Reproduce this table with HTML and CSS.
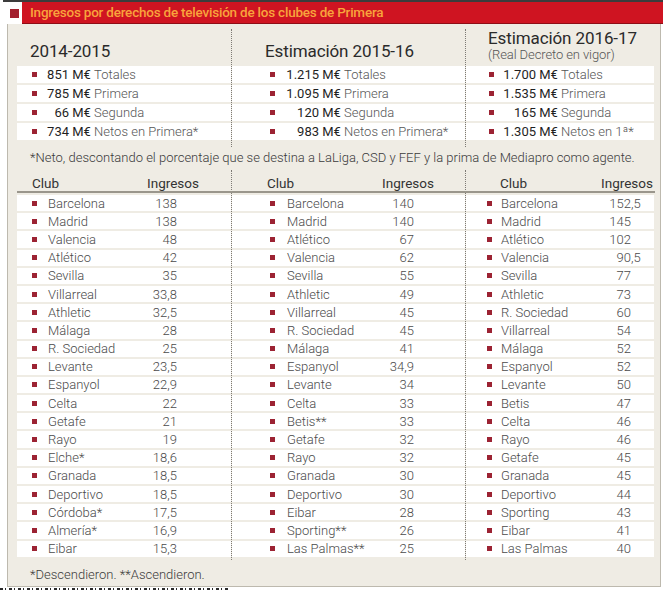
FILE: index.html
```html
<!DOCTYPE html>
<html lang="es">
<head>
<meta charset="utf-8">
<title>Ingresos por derechos de televisión</title>
<link rel="stylesheet" href="styles.css">
</head>
<body>
<div class="topline"></div>
<header class="masthead">
  <span class="mark"></span>
  <div class="bar"><h1 class="title">Ingresos por derechos de televisión de los clubes de Primera</h1></div>
</header>
<main class="panel">
  <section class="summary">
    <div class="scol c1">
      <div class="shead"><h2>2014-2015</h2></div>
      <div class="srow"><i class="dot"></i><span class="txt"><b class="n">851</b> M€ <span class="lbl">Totales</span></span></div>
      <div class="srow"><i class="dot"></i><span class="txt"><b class="n">785</b> M€ <span class="lbl">Primera</span></span></div>
      <div class="srow"><i class="dot"></i><span class="txt"><b class="n">66</b> M€ <span class="lbl">Segunda</span></span></div>
      <div class="srow"><i class="dot"></i><span class="txt"><b class="n">734</b> M€ <span class="lbl">Netos en Primera*</span></span></div>
    </div>
    <div class="scol c2">
      <div class="shead"><h2>Estimación 2015-16</h2></div>
      <div class="srow"><i class="dot"></i><span class="txt"><b class="n">1.215</b> M€ <span class="lbl">Totales</span></span></div>
      <div class="srow"><i class="dot"></i><span class="txt"><b class="n">1.095</b> M€ <span class="lbl">Primera</span></span></div>
      <div class="srow"><i class="dot"></i><span class="txt"><b class="n">120</b> M€ <span class="lbl">Segunda</span></span></div>
      <div class="srow"><i class="dot"></i><span class="txt"><b class="n">983</b> M€ <span class="lbl">Netos en Primera*</span></span></div>
    </div>
    <div class="scol c3">
      <div class="shead"><h2>Estimación 2016-17</h2><p class="sub">(Real Decreto en vigor)</p></div>
      <div class="srow"><i class="dot"></i><span class="txt"><b class="n">1.700</b> M€ <span class="lbl">Totales</span></span></div>
      <div class="srow"><i class="dot"></i><span class="txt"><b class="n">1.535</b> M€ <span class="lbl">Primera</span></span></div>
      <div class="srow"><i class="dot"></i><span class="txt"><b class="n">165</b> M€ <span class="lbl">Segunda</span></span></div>
      <div class="srow"><i class="dot"></i><span class="txt"><b class="n">1.305</b> M€ <span class="lbl">Netos en 1ª*</span></span></div>
    </div>
  </section>

  <p class="note">*Neto, descontando el porcentaje que se destina a LaLiga, CSD y FEF y la prima de Mediapro como agente.</p>

  <section class="table">
    <div class="tcol c1">
      <div class="thead"><span class="hclub">Club</span><span>Ingresos</span></div>
      <div class="tbody">
        <div class="trow"><i class="dot"></i><span class="club">Barcelona</span><span class="val">138</span></div>
        <div class="trow"><i class="dot"></i><span class="club">Madrid</span><span class="val">138</span></div>
        <div class="trow"><i class="dot"></i><span class="club">Valencia</span><span class="val">48</span></div>
        <div class="trow"><i class="dot"></i><span class="club">Atlético</span><span class="val">42</span></div>
        <div class="trow"><i class="dot"></i><span class="club">Sevilla</span><span class="val">35</span></div>
        <div class="trow"><i class="dot"></i><span class="club">Villarreal</span><span class="val">33,8</span></div>
        <div class="trow"><i class="dot"></i><span class="club">Athletic</span><span class="val">32,5</span></div>
        <div class="trow"><i class="dot"></i><span class="club">Málaga</span><span class="val">28</span></div>
        <div class="trow"><i class="dot"></i><span class="club">R. Sociedad</span><span class="val">25</span></div>
        <div class="trow"><i class="dot"></i><span class="club">Levante</span><span class="val">23,5</span></div>
        <div class="trow"><i class="dot"></i><span class="club">Espanyol</span><span class="val">22,9</span></div>
        <div class="trow"><i class="dot"></i><span class="club">Celta</span><span class="val">22</span></div>
        <div class="trow"><i class="dot"></i><span class="club">Getafe</span><span class="val">21</span></div>
        <div class="trow"><i class="dot"></i><span class="club">Rayo</span><span class="val">19</span></div>
        <div class="trow"><i class="dot"></i><span class="club">Elche*</span><span class="val">18,6</span></div>
        <div class="trow"><i class="dot"></i><span class="club">Granada</span><span class="val">18,5</span></div>
        <div class="trow"><i class="dot"></i><span class="club">Deportivo</span><span class="val">18,5</span></div>
        <div class="trow"><i class="dot"></i><span class="club">Córdoba*</span><span class="val">17,5</span></div>
        <div class="trow"><i class="dot"></i><span class="club">Almería*</span><span class="val">16,9</span></div>
        <div class="trow"><i class="dot"></i><span class="club">Eibar</span><span class="val">15,3</span></div>
      </div>
    </div>
    <div class="tcol c2">
      <div class="thead"><span class="hclub">Club</span><span>Ingresos</span></div>
      <div class="tbody">
        <div class="trow"><i class="dot"></i><span class="club">Barcelona</span><span class="val">140</span></div>
        <div class="trow"><i class="dot"></i><span class="club">Madrid</span><span class="val">140</span></div>
        <div class="trow"><i class="dot"></i><span class="club">Atlético</span><span class="val">67</span></div>
        <div class="trow"><i class="dot"></i><span class="club">Valencia</span><span class="val">62</span></div>
        <div class="trow"><i class="dot"></i><span class="club">Sevilla</span><span class="val">55</span></div>
        <div class="trow"><i class="dot"></i><span class="club">Athletic</span><span class="val">49</span></div>
        <div class="trow"><i class="dot"></i><span class="club">Villarreal</span><span class="val">45</span></div>
        <div class="trow"><i class="dot"></i><span class="club">R. Sociedad</span><span class="val">45</span></div>
        <div class="trow"><i class="dot"></i><span class="club">Málaga</span><span class="val">41</span></div>
        <div class="trow"><i class="dot"></i><span class="club">Espanyol</span><span class="val">34,9</span></div>
        <div class="trow"><i class="dot"></i><span class="club">Levante</span><span class="val">34</span></div>
        <div class="trow"><i class="dot"></i><span class="club">Celta</span><span class="val">33</span></div>
        <div class="trow"><i class="dot"></i><span class="club">Betis**</span><span class="val">33</span></div>
        <div class="trow"><i class="dot"></i><span class="club">Getafe</span><span class="val">32</span></div>
        <div class="trow"><i class="dot"></i><span class="club">Rayo</span><span class="val">32</span></div>
        <div class="trow"><i class="dot"></i><span class="club">Granada</span><span class="val">30</span></div>
        <div class="trow"><i class="dot"></i><span class="club">Deportivo</span><span class="val">30</span></div>
        <div class="trow"><i class="dot"></i><span class="club">Eibar</span><span class="val">28</span></div>
        <div class="trow"><i class="dot"></i><span class="club">Sporting**</span><span class="val">26</span></div>
        <div class="trow"><i class="dot"></i><span class="club">Las Palmas**</span><span class="val">25</span></div>
      </div>
    </div>
    <div class="tcol c3">
      <div class="thead"><span class="hclub">Club</span><span>Ingresos</span></div>
      <div class="tbody">
        <div class="trow"><i class="dot"></i><span class="club">Barcelona</span><span class="val">152<span class="dec">,5</span></span></div>
        <div class="trow"><i class="dot"></i><span class="club">Madrid</span><span class="val">145</span></div>
        <div class="trow"><i class="dot"></i><span class="club">Atlético</span><span class="val">102</span></div>
        <div class="trow"><i class="dot"></i><span class="club">Valencia</span><span class="val">90<span class="dec">,5</span></span></div>
        <div class="trow"><i class="dot"></i><span class="club">Sevilla</span><span class="val">77</span></div>
        <div class="trow"><i class="dot"></i><span class="club">Athletic</span><span class="val">73</span></div>
        <div class="trow"><i class="dot"></i><span class="club">R. Sociedad</span><span class="val">60</span></div>
        <div class="trow"><i class="dot"></i><span class="club">Villarreal</span><span class="val">54</span></div>
        <div class="trow"><i class="dot"></i><span class="club">Málaga</span><span class="val">52</span></div>
        <div class="trow"><i class="dot"></i><span class="club">Espanyol</span><span class="val">52</span></div>
        <div class="trow"><i class="dot"></i><span class="club">Levante</span><span class="val">50</span></div>
        <div class="trow"><i class="dot"></i><span class="club">Betis</span><span class="val">47</span></div>
        <div class="trow"><i class="dot"></i><span class="club">Celta</span><span class="val">46</span></div>
        <div class="trow"><i class="dot"></i><span class="club">Rayo</span><span class="val">46</span></div>
        <div class="trow"><i class="dot"></i><span class="club">Getafe</span><span class="val">45</span></div>
        <div class="trow"><i class="dot"></i><span class="club">Granada</span><span class="val">45</span></div>
        <div class="trow"><i class="dot"></i><span class="club">Deportivo</span><span class="val">44</span></div>
        <div class="trow"><i class="dot"></i><span class="club">Sporting</span><span class="val">43</span></div>
        <div class="trow"><i class="dot"></i><span class="club">Eibar</span><span class="val">41</span></div>
        <div class="trow"><i class="dot"></i><span class="club">Las Palmas</span><span class="val">40</span></div>
      </div>
    </div>
  </section>

  <p class="legend">*Descendieron. **Ascendieron.</p>
</main>
<div class="scrap"></div>
</body>
</html>
```
FILE: styles.css
```css
* {
  box-sizing: border-box;
  margin: 0;
  padding: 0;
}

html,
body {
  background: #ffffff;
}

body {
  width: 663px;
  overflow: hidden;
  font-family: Roboto, "Liberation Sans", Arial, sans-serif;
  color: #333333;
}

.topline {
  height: 2px;
  margin-left: 3px;
  background: #3c3c3c;
}

.masthead {
  display: flex;
  align-items: flex-start;
  height: 22px;
}

.mark {
  flex: none;
  width: 9px;
  height: 9px;
  margin: 7px 0 0 10px;
  background: #a3202e;
}

.bar {
  flex: 1;
  height: 22px;
  margin-left: 3px;
  padding-left: 8px;
  background: #cf1421;
  border-bottom: 1px solid #8e0d16;
  overflow: hidden;
}

.title {
  display: inline-block;
  font-size: 13.5px;
  line-height: 21px;
  font-weight: 500;
  color: #f8a43c;
  white-space: nowrap;
  letter-spacing: -0.22px;
}

.panel {
  display: block;
  width: 654px;
  height: 563px;
  margin-left: 7px;
  padding: 5px 6px 0 9px;
  background: #efece4;
  border: 1px solid #bdb9ae;
  border-top: 0;
}

/* summary block */
.summary {
  display: flex;
}

.scol {
  display: flex;
  flex-direction: column;
  padding-bottom: 5px;
}

.c1 {
  width: 215px;
  border-right: 1px dotted #7d7a74;
}

.c2 {
  width: 234px;
  border-right: 1px dotted #7d7a74;
}

.c3 {
  flex: 1;
}

.shead {
  height: 37px;
  display: flex;
  align-items: center;
  padding-top: 6px;
}

.c1 .shead {
  padding-left: 13px;
}

.c2 .shead {
  padding-left: 33px;
}

.c3 .shead {
  flex-direction: column;
  align-items: flex-start;
  padding-top: 0;
  padding-left: 22px;
}

h2 {
  font-size: 17px;
  line-height: 18px;
  font-weight: 400;
  letter-spacing: -0.1px;
  color: #2a2a2a;
  white-space: nowrap;
}

.sub {
  font-size: 13px;
  line-height: 16px;
  font-weight: 300;
  color: #555555;
  letter-spacing: -0.1px;
}

.srow {
  height: 17px;
  margin-bottom: 2px;
  display: flex;
  align-items: center;
  background: #ffffff;
  font-size: 13px;
  white-space: nowrap;
}

.dot {
  flex: none;
  width: 5px;
  height: 5px;
  background: #9c2333;
}

.c1 .srow .dot {
  margin-left: 15px;
}

.c2 .srow .dot {
  margin-left: 38px;
}

.c3 .srow .dot {
  margin-left: 23px;
}

.txt {
  font-weight: 400;
  color: #1f1f1f;
}

.n {
  display: inline-block;
  text-align: right;
  font-weight: 400;
}

.c1 .txt {
  margin-left: 10px;
}

.c1 .n {
  width: 22px;
}

.c2 .txt {
  margin-left: 11px;
}

.c2 .n {
  width: 33px;
}

.c3 .txt {
  margin-left: 9px;
}

.c3 .n {
  width: 33px;
}

.lbl {
  font-weight: 300;
  color: #555555;
}

.note {
  margin-top: 3px;
  padding-left: 13px;
  font-size: 13px;
  line-height: 16px;
  font-weight: 300;
  color: #3a3a3a;
  white-space: nowrap;
}

/* club table */
.table {
  display: flex;
  margin-top: 4px;
}

.tcol {
  padding-top: 5px;
  padding-bottom: 3px;
}

.thead {
  display: flex;
  align-items: center;
  height: 18px;
  margin-right: -1px;
  border-bottom: 2px solid #9a968c;
  font-size: 13.5px;
  color: #333333;
  white-space: nowrap;
}

.c1 .thead {
  padding-left: 15px;
}

.c2 .thead {
  padding-left: 35px;
}

.c3 .thead {
  padding-left: 34px;
}

.c1 .hclub,
.c2 .hclub {
  width: 115px;
}

.c3 .hclub {
  width: 101px;
}

.tbody {
  margin-top: 2px;
}

.trow {
  height: 16.2px;
  margin-bottom: 2px;
  display: flex;
  align-items: center;
  background: #ffffff;
  font-size: 13px;
  font-weight: 300;
  color: #4a4a4a;
  white-space: nowrap;
}

.trow:last-child {
  margin-bottom: 0;
}

.club {
  flex: 1;
}

.val {
  text-align: right;
}

.c1 .trow {
  padding-right: 54px;
}

.c1 .trow .dot {
  margin-left: 15px;
}

.c1 .club {
  margin-left: 11px;
}

.c2 .trow {
  padding-right: 51px;
}

.c2 .trow .dot {
  margin-left: 38px;
}

.c2 .club {
  margin-left: 12px;
}

.c3 .trow {
  padding-right: 23px;
}

.c3 .trow .dot {
  margin-left: 21px;
}

.c3 .club {
  margin-left: 9px;
}

.dec {
  display: inline-block;
  width: 0;
}

.legend {
  margin-top: 7px;
  padding-left: 13px;
  font-size: 13px;
  line-height: 16px;
  font-weight: 300;
  color: #3a3a3a;
}

.scrap {
  width: 230px;
  height: 2px;
  margin-top: 1px;
  background: repeating-linear-gradient(90deg, #2a2a2a 0 3px, transparent 3px 5px, #2a2a2a 5px 6px, transparent 6px 9px);
}
```
